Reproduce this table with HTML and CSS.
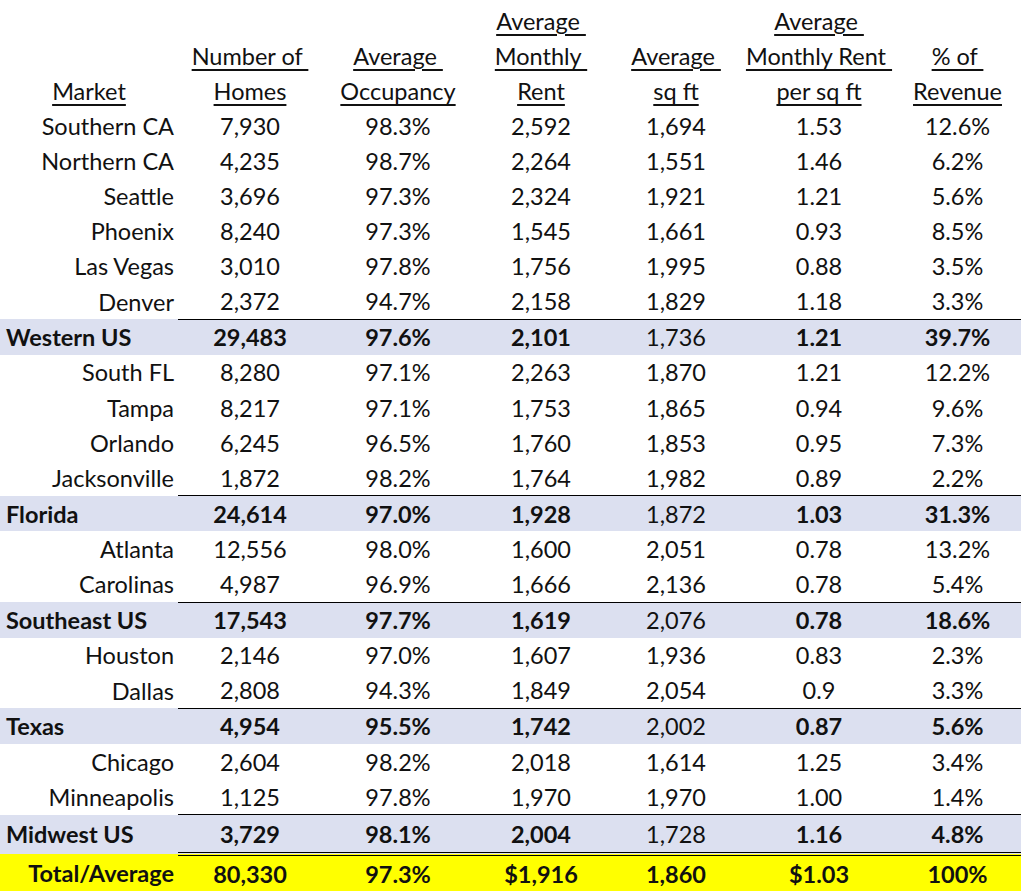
FILE: index.html
```html
<!DOCTYPE html>
<html lang="en">
<head>
<meta charset="utf-8">
<title>Markets</title>
<link rel="stylesheet" href="styles.css">
</head>
<body>
<table class="grid">
  <colgroup>
    <col class="c1"><col class="c2"><col class="c3"><col class="c4"><col class="c5"><col class="c6"><col class="c7">
  </colgroup>
  <thead>
    <tr class="hd">
      <th></th><th></th><th></th><th><u>Average&nbsp;</u></th><th></th><th><u>Average&nbsp;</u></th><th></th>
    </tr>
    <tr class="hd">
      <th></th><th><u>Number of&nbsp;</u></th><th><u>Average&nbsp;</u></th><th><u>Monthly&nbsp;</u></th><th><u>Average&nbsp;</u></th><th><u>Monthly Rent&nbsp;</u></th><th><u>% of&nbsp;</u></th>
    </tr>
    <tr class="hd">
      <th><u>Market</u></th><th><u>Homes</u></th><th><u>Occupancy</u></th><th><u>Rent</u></th><th><u>sq ft</u></th><th><u>per sq ft</u></th><th><u>Revenue</u></th>
    </tr>
  </thead>
  <tbody>
    <tr><td class="name">Southern CA</td><td>7,930</td><td>98.3%</td><td>2,592</td><td>1,694</td><td>1.53</td><td>12.6%</td></tr>
    <tr><td class="name">Northern CA</td><td>4,235</td><td>98.7%</td><td>2,264</td><td>1,551</td><td>1.46</td><td>6.2%</td></tr>
    <tr><td class="name">Seattle</td><td>3,696</td><td>97.3%</td><td>2,324</td><td>1,921</td><td>1.21</td><td>5.6%</td></tr>
    <tr><td class="name">Phoenix</td><td>8,240</td><td>97.3%</td><td>1,545</td><td>1,661</td><td>0.93</td><td>8.5%</td></tr>
    <tr><td class="name">Las Vegas</td><td>3,010</td><td>97.8%</td><td>1,756</td><td>1,995</td><td>0.88</td><td>3.5%</td></tr>
    <tr><td class="name">Denver</td><td>2,372</td><td>94.7%</td><td>2,158</td><td>1,829</td><td>1.18</td><td>3.3%</td></tr>
    <tr class="sum"><td class="region">Western US</td><td>29,483</td><td>97.6%</td><td>2,101</td><td class="reg">1,736</td><td>1.21</td><td>39.7%</td></tr>
    <tr><td class="name">South FL</td><td>8,280</td><td>97.1%</td><td>2,263</td><td>1,870</td><td>1.21</td><td>12.2%</td></tr>
    <tr><td class="name">Tampa</td><td>8,217</td><td>97.1%</td><td>1,753</td><td>1,865</td><td>0.94</td><td>9.6%</td></tr>
    <tr><td class="name">Orlando</td><td>6,245</td><td>96.5%</td><td>1,760</td><td>1,853</td><td>0.95</td><td>7.3%</td></tr>
    <tr><td class="name">Jacksonville</td><td>1,872</td><td>98.2%</td><td>1,764</td><td>1,982</td><td>0.89</td><td>2.2%</td></tr>
    <tr class="sum"><td class="region">Florida</td><td>24,614</td><td>97.0%</td><td>1,928</td><td class="reg">1,872</td><td>1.03</td><td>31.3%</td></tr>
    <tr><td class="name">Atlanta</td><td>12,556</td><td>98.0%</td><td>1,600</td><td>2,051</td><td>0.78</td><td>13.2%</td></tr>
    <tr><td class="name">Carolinas</td><td>4,987</td><td>96.9%</td><td>1,666</td><td>2,136</td><td>0.78</td><td>5.4%</td></tr>
    <tr class="sum"><td class="region">Southeast US</td><td>17,543</td><td>97.7%</td><td>1,619</td><td class="reg">2,076</td><td>0.78</td><td>18.6%</td></tr>
    <tr><td class="name">Houston</td><td>2,146</td><td>97.0%</td><td>1,607</td><td>1,936</td><td>0.83</td><td>2.3%</td></tr>
    <tr><td class="name">Dallas</td><td>2,808</td><td>94.3%</td><td>1,849</td><td>2,054</td><td>0.9</td><td>3.3%</td></tr>
    <tr class="sum"><td class="region">Texas</td><td>4,954</td><td>95.5%</td><td>1,742</td><td class="reg">2,002</td><td>0.87</td><td>5.6%</td></tr>
    <tr><td class="name">Chicago</td><td>2,604</td><td>98.2%</td><td>2,018</td><td>1,614</td><td>1.25</td><td>3.4%</td></tr>
    <tr><td class="name">Minneapolis</td><td>1,125</td><td>97.8%</td><td>1,970</td><td>1,970</td><td>1.00</td><td>1.4%</td></tr>
    <tr class="sum last"><td class="region">Midwest US</td><td>3,729</td><td>98.1%</td><td>2,004</td><td class="reg">1,728</td><td>1.16</td><td>4.8%</td></tr>
    <tr class="total"><td class="name">Total/Average</td><td>80,330</td><td>97.3%</td><td>$1,916</td><td>1,860</td><td>$1.03</td><td>100%</td></tr>
  </tbody>
</table>
</body>
</html>
```
FILE: styles.css
```css
html, body {
  margin: 0;
  padding: 0;
  background: #ffffff;
}

body {
  font-family: Lato, "Liberation Sans", sans-serif;
  font-size: 23.5px;
  color: #111111;
}

.grid {
  width: 1021px;
  table-layout: fixed;
  border-collapse: collapse;
  border-spacing: 0;
  margin-top: 3px;
}

.c1 { width: 178px; }
.c2 { width: 144px; }
.c3 { width: 152px; }
.c4 { width: 134px; }
.c5 { width: 136px; }
.c6 { width: 150px; }
.c7 { width: 127px; }

.grid th,
.grid td {
  padding: 0;
  height: 35.1px;
  line-height: 28px;
  text-align: center;
  vertical-align: middle;
  white-space: nowrap;
  font-weight: 400;
}

.grid th u {
  text-decoration: underline;
  text-decoration-thickness: 2px;
  text-underline-offset: 4px;
}

.grid td.name {
  text-align: right;
  padding-right: 4px;
}

.grid td.region {
  text-align: left;
  padding-left: 6px;
}

.sum td {
  background: #dce0f0;
  font-weight: 700;
  border-top: 1.5px solid #000;
}

.sum td:first-child {
  border-top: none;
}

.sum td.reg {
  font-weight: 400;
}

.grid .last td {
  height: 37px;
  border-bottom: 4px double #000;
}

.grid .last td:first-child {
  border-bottom: none;
}

.total td {
  background: #ffff00;
  font-weight: 700;
}
```
